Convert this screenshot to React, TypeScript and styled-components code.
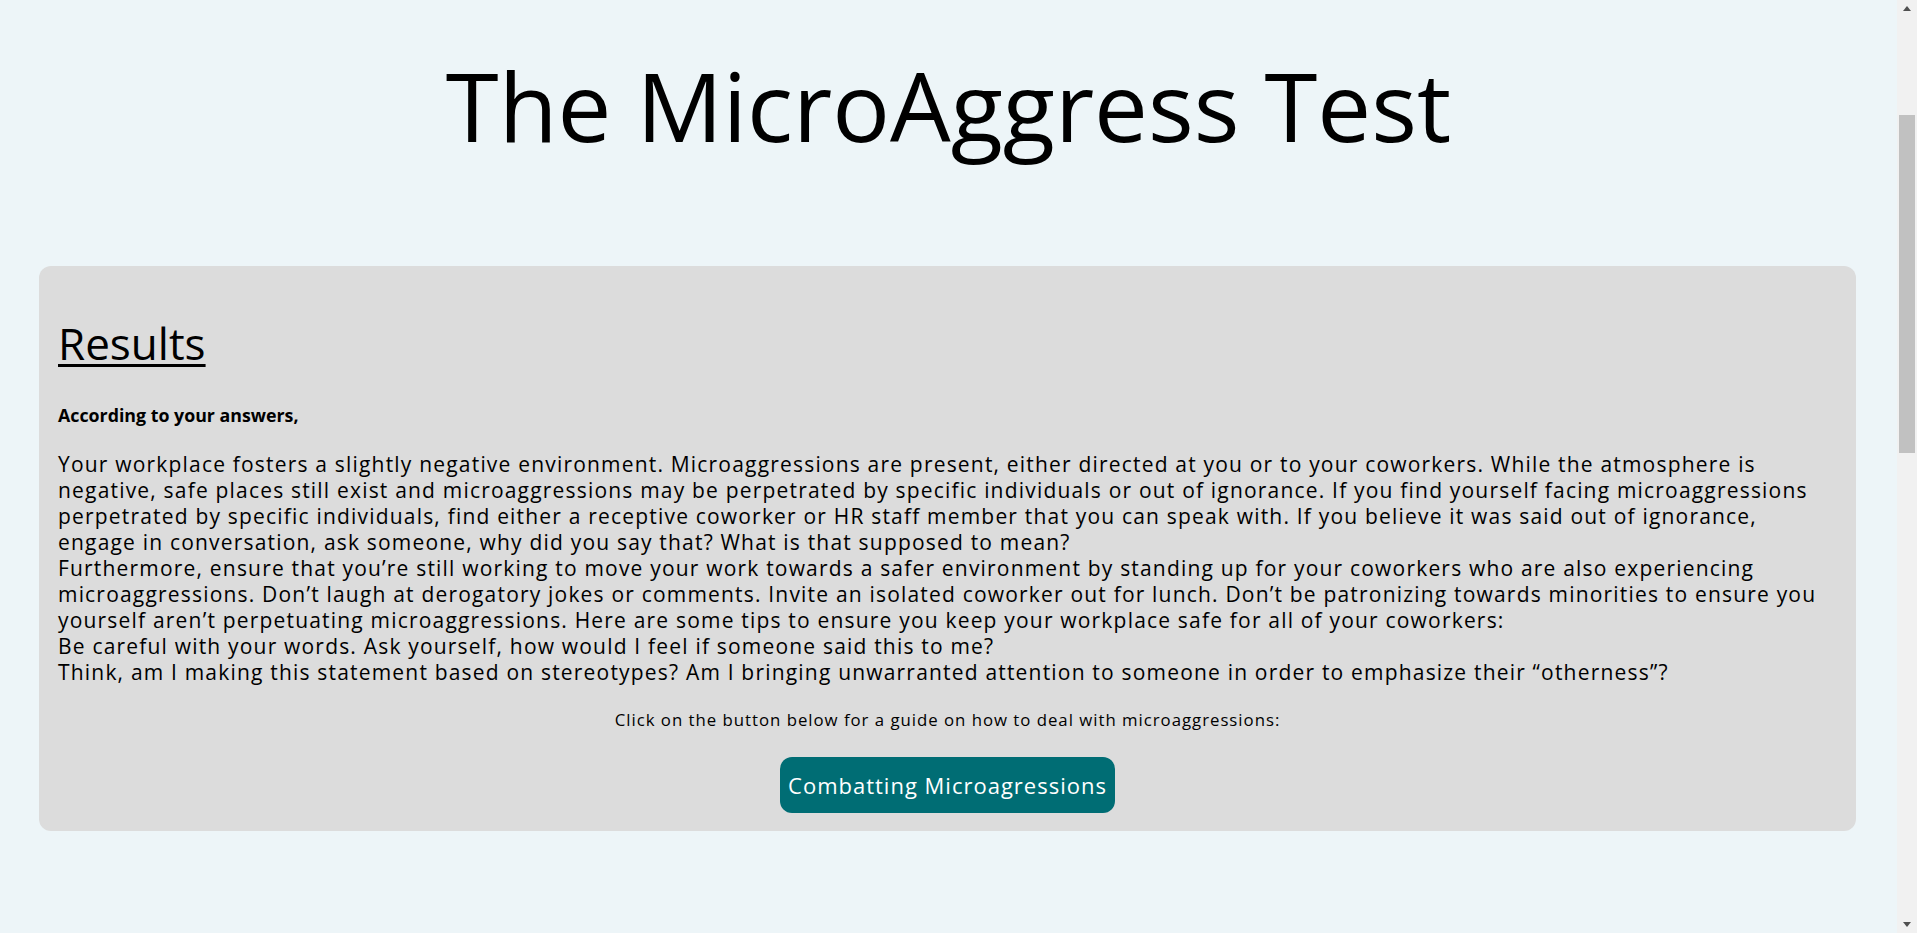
import React from "react"
import styled, { createGlobalStyle } from "styled-components"

const GlobalStyle = createGlobalStyle`
  html, body {
    margin: 0;
    padding: 0;
    height: 100%;
    overflow: hidden;
  }
  body {
    background: #edf5f8;
    font-family: "Open Sans", "Liberation Sans", sans-serif;
    color: #000;
  }
`

const Window = styled.div`
  display: flex;
  height: 100vh;
`

const Main = styled.main`
  flex: 1;
  min-width: 0;
`

const Title = styled.h1`
  margin: 0;
  padding-top: 39px;
  font-size: 96px;
  font-weight: 400;
  line-height: 131px;
  text-align: center;
`

const Card = styled.section`
  margin: 96px 41px 0 39px;
  padding: 47px 19px 18px;
  background: #dcdcdc;
  border-radius: 12px;
`

const Heading = styled.h2`
  margin: 0;
  font-size: 44px;
  font-weight: 400;
  line-height: normal;
  text-decoration: underline;
  text-decoration-thickness: 3px;
  text-underline-offset: 4px;
`

const Lead = styled.p`
  margin: 30px 0 0;
  font-size: 17.8px;
  font-weight: 700;
  line-height: normal;
`

const Body = styled.div`
  margin-top: 24px;
  font-size: 21px;
  letter-spacing: 1.19px;
  line-height: 26px;
`

const Paragraph = styled.p`
  margin: 0;
`

const Prompt = styled.p`
  margin: 23px 0 0;
  font-size: 16.8px;
  letter-spacing: 0.98px;
  line-height: 24.5px;
  text-align: center;
`

const Actions = styled.div`
  display: flex;
  justify-content: center;
  margin-top: 24px;
`

const Button = styled.button`
  height: 56px;
  padding: 0 8px;
  border: none;
  border-radius: 12px;
  background: #006d74;
  color: #fff;
  font-family: inherit;
  font-size: 22px;
  letter-spacing: 1px;
  cursor: pointer;

  &:hover {
    opacity: 0.9;
  }
`

const ScrollTrack = styled.div`
  width: 20px;
  height: 100vh;
  background: #f1f1f1;
  display: flex;
  flex-direction: column;
  align-items: center;
`

const ScrollArrow = styled.div`
  height: 17px;
  width: 100%;
  display: flex;
  align-items: center;
  justify-content: center;
`

const ScrollSpace = styled.div`
  flex: 1;
  width: 100%;
  display: flex;
  justify-content: center;
`

const ScrollThumb = styled.div`
  margin-top: 98px;
  width: 16px;
  height: 338px;
  background: #c1c1c1;
`

const paragraphs = [
  "Your workplace fosters a slightly negative environment. Microaggressions are present, either directed at you or to your coworkers. While the atmosphere is negative, safe places still exist and microaggressions may be perpetrated by specific individuals or out of ignorance. If you find yourself facing microaggressions perpetrated by specific individuals, find either a receptive coworker or HR staff member that you can speak with. If you believe it was said out of ignorance, engage in conversation, ask someone, why did you say that? What is that supposed to mean?",
  "Furthermore, ensure that you’re still working to move your work towards a safer environment by standing up for your coworkers who are also experiencing microaggressions. Don’t laugh at derogatory jokes or comments. Invite an isolated coworker out for lunch. Don’t be patronizing towards minorities to ensure you yourself aren’t perpetuating microaggressions. Here are some tips to ensure you keep your workplace safe for all of your coworkers:",
  "Be careful with your words. Ask yourself, how would I feel if someone said this to me?",
  "Think, am I making this statement based on stereotypes? Am I bringing unwarranted attention to someone in order to emphasize their “otherness”?",
]

const Arrow = ({ down }: { down?: boolean }) => (
  <svg width="8" height="5" viewBox="0 0 8 5">
    <path d={down ? "M0 0 L8 0 L4 5 Z" : "M4 0 L8 5 L0 5 Z"} fill="#505050" />
  </svg>
)

export default function App() {
  return (
    <>
      <GlobalStyle />
      <Window>
        <Main>
          <Title>The MicroAggress Test</Title>
          <Card>
            <Heading>Results</Heading>
            <Lead>According to your answers,</Lead>
            <Body>
              {paragraphs.map((text, i) => (
                <Paragraph key={i}>{text}</Paragraph>
              ))}
            </Body>
            <Prompt>Click on the button below for a guide on how to deal with microaggressions:</Prompt>
            <Actions>
              <Button>Combatting Microagressions</Button>
            </Actions>
          </Card>
        </Main>
        <ScrollTrack>
          <ScrollArrow>
            <Arrow />
          </ScrollArrow>
          <ScrollSpace>
            <ScrollThumb />
          </ScrollSpace>
          <ScrollArrow>
            <Arrow down />
          </ScrollArrow>
        </ScrollTrack>
      </Window>
    </>
  )
}
